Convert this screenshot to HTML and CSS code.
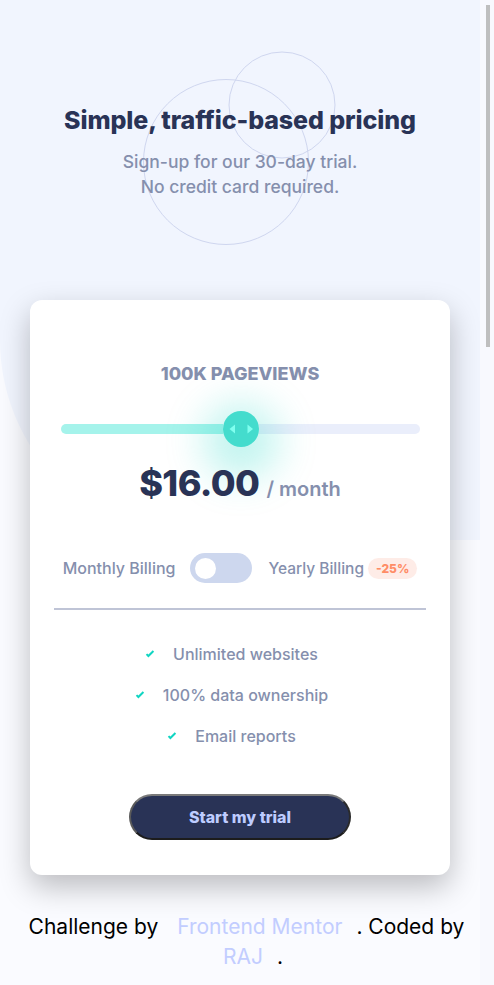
FILE: index.html
```html
<!DOCTYPE html>
<html lang="en">
<head>
<meta charset="utf-8">
<title>Interactive pricing component</title>
<link rel="stylesheet" href="styles.css">
</head>
<body>
<div class="page">
  <header class="hero">
    <svg class="circles" width="480" height="300" viewBox="0 0 480 300" aria-hidden="true">
      <circle cx="226" cy="162" r="82.5" />
      <circle cx="282" cy="105" r="53" />
    </svg>
    <h1 class="title">Simple, traffic-based pricing</h1>
    <p class="sub">Sign-up for our 30-day trial.<br>No credit card required.</p>
  </header>

  <main class="card">
    <p class="views">100K Pageviews</p>
    <div class="slider">
      <span class="fill"></span>
      <span class="thumb">
        <svg width="36" height="36" viewBox="0 0 36 36" aria-hidden="true">
          <path d="M12 13.5 L6.5 18 L12 22.5 Z" />
          <path d="M24.5 13.5 L30 18 L24.5 22.5 Z" />
        </svg>
      </span>
      <span class="rest"></span>
    </div>
    <p class="price"><span class="amount">$16.00</span><span class="per">/ month</span></p>

    <div class="billing">
      <span class="bill-label">Monthly Billing</span>
      <span class="toggle"><span class="knob"></span></span>
      <span class="bill-label yearly">Yearly Billing</span>
      <span class="badge">-25%</span>
    </div>

    <div class="divider"></div>

    <ul class="features">
      <li><svg class="check" width="10" height="8" viewBox="0 0 9 8"><path d="M1 4.134l1.907 1.908L7.949 1" /></svg><span>Unlimited websites</span></li>
      <li><svg class="check" width="10" height="8" viewBox="0 0 9 8"><path d="M1 4.134l1.907 1.908L7.949 1" /></svg><span>100% data ownership</span></li>
      <li><svg class="check" width="10" height="8" viewBox="0 0 9 8"><path d="M1 4.134l1.907 1.908L7.949 1" /></svg><span>Email reports</span></li>
    </ul>

    <button class="cta" type="button">Start my trial</button>
  </main>

  <footer class="attribution">
    Challenge by <a href="#" class="link">Frontend Mentor</a>. Coded by<br><a href="#" class="link">RAJ</a>.
  </footer>
</div>
<div class="scrollbar" aria-hidden="true"><span class="scroll-thumb"></span></div>
</body>
</html>
```

FILE: styles.css
```css
html {
  background: #fafbff;
}

body {
  margin: 0;
  background: #fafbff;
  font-family: Inter, "Noto Sans", sans-serif;
}

.page {
  position: relative;
  z-index: 0;
  width: 480px;
  min-height: 2840px;
}

.page::before {
  content: "";
  position: absolute;
  top: 0;
  left: 0;
  right: 0;
  height: 540px;
  background: #f1f5fe;
  border-bottom-left-radius: 200px;
  z-index: -1;
}

.scrollbar {
  position: fixed;
  top: 0;
  right: 0;
  bottom: 0;
  width: 14px;
  background: #f8f9fe;
  display: flex;
  flex-direction: column;
  padding: 5px 4px 0 6px;
  box-sizing: border-box;
}

.scroll-thumb {
  width: 4px;
  height: 342px;
  background: #bfbfbf;
}

.hero {
  position: relative;
  z-index: 0;
  padding: 105px 0 101px;
  text-align: center;
}

.circles {
  position: absolute;
  top: 0;
  left: 0;
  z-index: -1;
  fill: none;
  stroke: #cfd6ef;
  stroke-width: 1;
}

.title {
  margin: 0;
  font-size: 25px;
  line-height: 30px;
  font-weight: 800;
  color: #293356;
  letter-spacing: -0.1px;
}

.sub {
  margin: 14px 0 0;
  font-size: 17.5px;
  line-height: 25px;
  font-weight: 500;
  color: #858fad;
}

.card {
  width: 420px;
  box-sizing: border-box;
  margin: 0 auto;
  padding: 62px 0 35px;
  background: #fff;
  border-radius: 12px;
  box-shadow: 0 12px 30px rgba(0, 0, 0, 0.25);
  text-align: center;
}

.views {
  margin: 0;
  font-size: 18px;
  line-height: 24px;
  font-weight: 800;
  color: #858fad;
  text-transform: uppercase;
}

.slider {
  margin: 24px 30px 0 31px;
  height: 37px;
  display: flex;
  align-items: center;
}

.fill {
  flex: 1;
  height: 10px;
  background: #a5f3eb;
  border-radius: 5px 0 0 5px;
}

.rest {
  flex: 1;
  height: 10px;
  background: #eaeefb;
  border-radius: 0 5px 5px 0;
}

.thumb {
  position: relative;
  flex: none;
  width: 36px;
  height: 36px;
  border-radius: 50%;
  background: #44dccd;
  box-shadow: 0 12px 38px 20px rgba(16, 213, 194, 0.26);
  display: flex;
}

.thumb path {
  fill: #80ffef;
}

.price {
  position: relative;
  margin: 14px 0 0;
  height: 44px;
  display: flex;
  justify-content: center;
  align-items: baseline;
  gap: 7px;
}

.amount {
  font-size: 36px;
  line-height: 44px;
  font-weight: 800;
  color: #293356;
  letter-spacing: -0.6px;
}

.per {
  font-size: 20px;
  font-weight: 600;
  color: #858fad;
}

.billing {
  margin-top: 48px;
  height: 30px;
  display: flex;
  justify-content: center;
  align-items: center;
  font-size: 16px;
  font-weight: 500;
  color: #858fad;
}

.bill-label {
  margin-right: 15px;
}

.bill-label.yearly {
  margin: 0 4px 0 16px;
  font-size: 15.5px;
}

.toggle {
  width: 62px;
  height: 30px;
  box-sizing: border-box;
  padding: 0 5px;
  border-radius: 15px;
  background: #cdd7ee;
  display: flex;
  align-items: center;
}

.knob {
  width: 21px;
  height: 21px;
  border-radius: 50%;
  background: #fff;
}

.badge {
  padding: 0 8px;
  line-height: 21px;
  border-radius: 11px;
  background: #feece7;
  color: #ff8c66;
  font-size: 12px;
  font-weight: 800;
}

.divider {
  margin: 25px 24px 0;
  height: 2px;
  background: #bfc4d6;
}

.features {
  list-style: none;
  margin: 34px 0 0;
  padding: 0 17px 0 0;
  display: flex;
  flex-direction: column;
  align-items: center;
  gap: 21px;
}

.features li {
  display: flex;
  align-items: center;
  gap: 18px;
  font-size: 16px;
  line-height: 20px;
  font-weight: 500;
  color: #858fad;
}

.check {
  fill: none;
  stroke: #10d5c2;
  stroke-width: 2;
}

.cta {
  display: block;
  margin: 48px auto 0;
  width: 222px;
  height: 46px;
  border-radius: 23px;
  border: 2px solid;
  border-color: #7a7a7a #2a2a2a #1c1c1c #5a5a5a;
  background: #293356;
  color: #bdccff;
  font-family: Inter, "Noto Sans", sans-serif;
  font-size: 16px;
  font-weight: 800;
}

.attribution {
  margin-top: 37px;
  padding-left: 13px;
  text-align: center;
  font-size: 21px;
  line-height: 30px;
  color: #000;
}

.link {
  color: #c2cdff;
  text-decoration: none;
  margin: 0 14px 0 13px;
}
```
